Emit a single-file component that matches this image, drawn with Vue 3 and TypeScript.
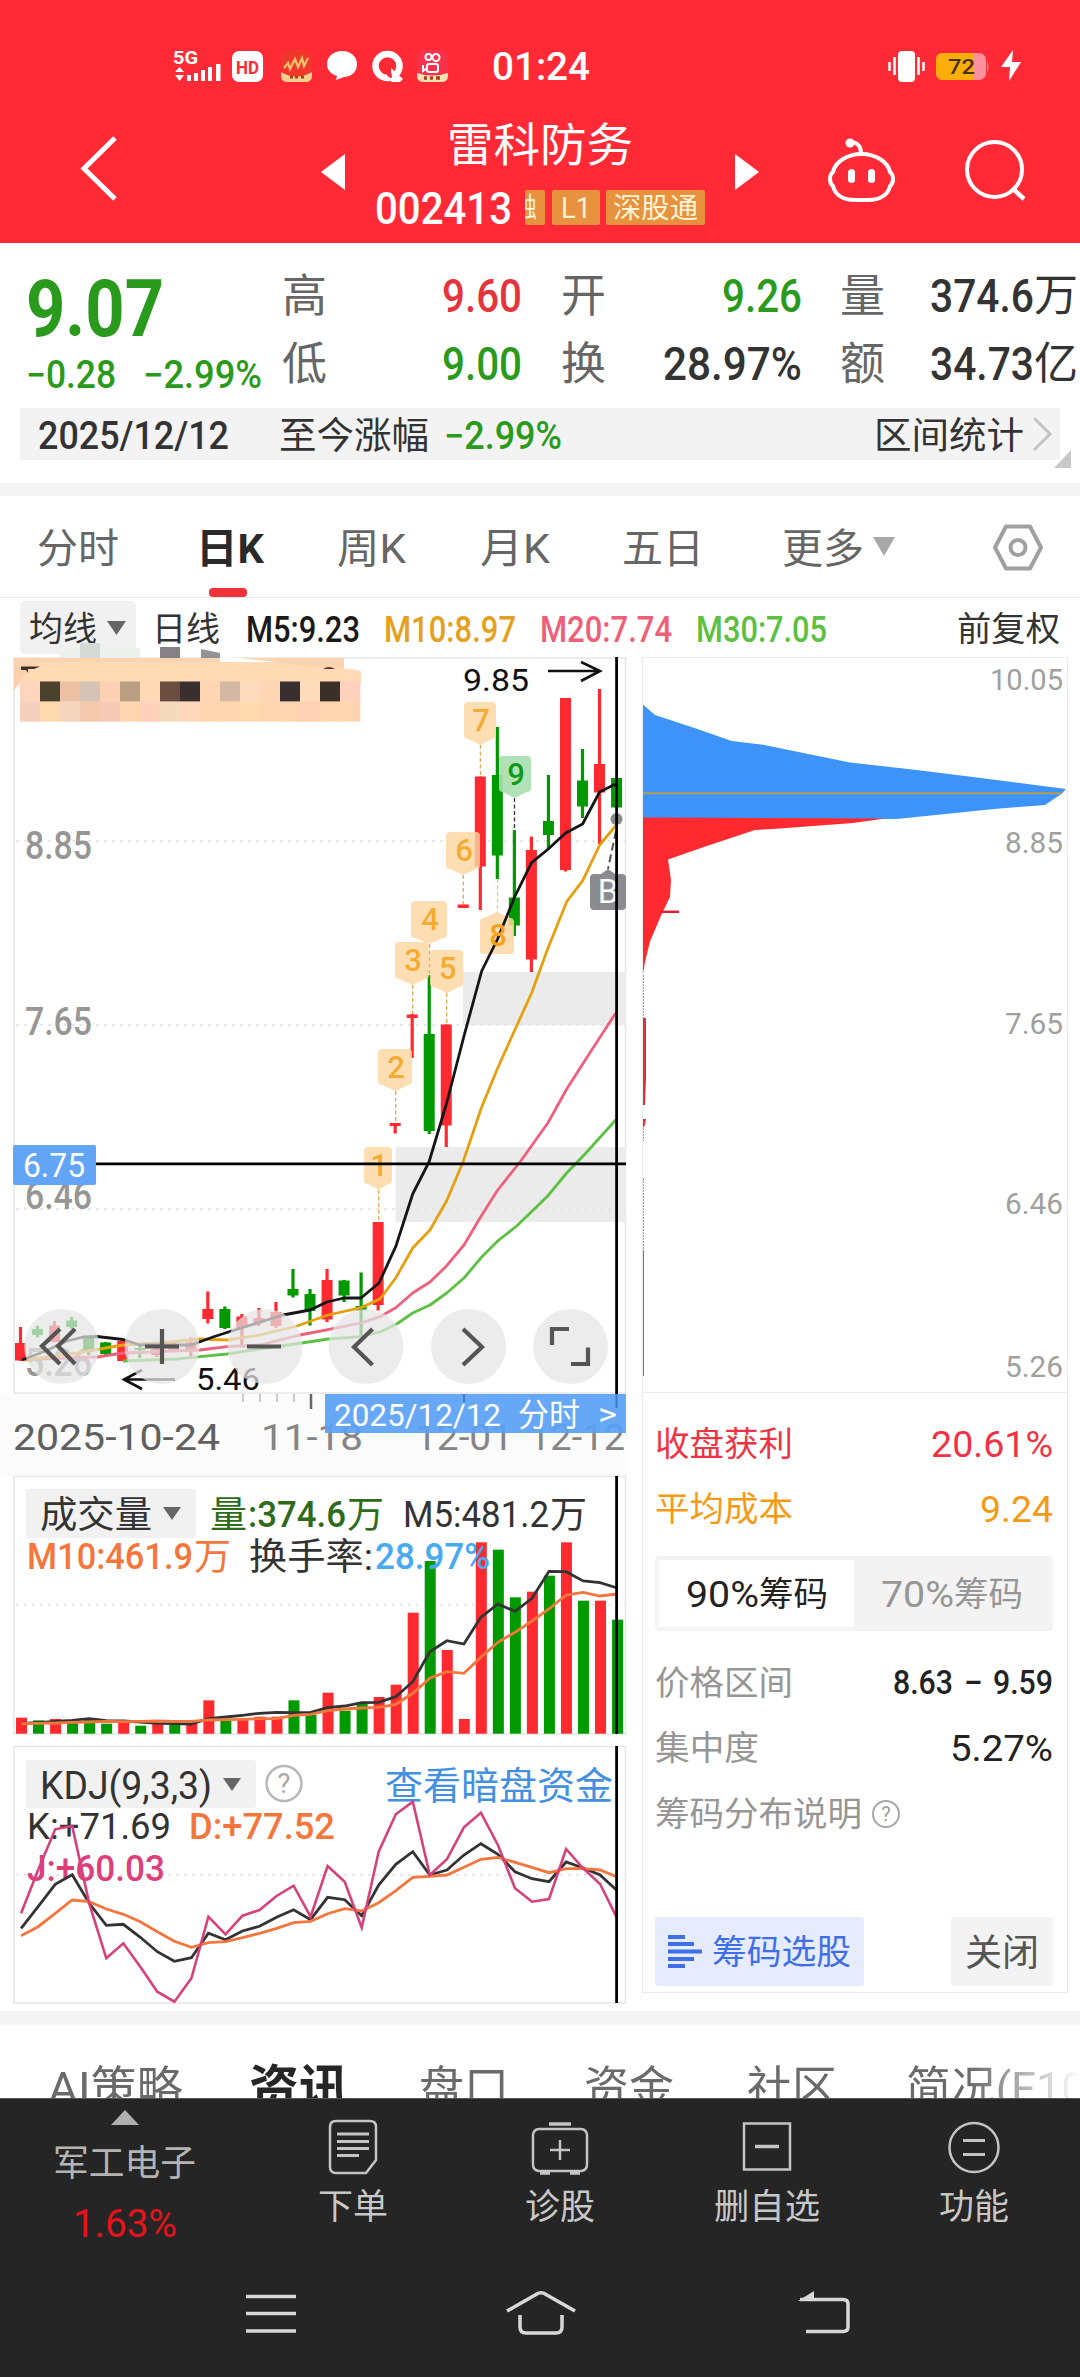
<script setup lang="ts">
import { h } from 'vue'

interface FitProps { t: string; w: number; s: number; b?: number | string; c?: string }

// Single-line label squeezed to an exact advance width, like a condensed DIN face.
const Fit = (p: FitProps) =>
  h('svg', { width: p.w, height: p.s, viewBox: `0 0 ${p.w} ${p.s}`, class: 'fit' }, [
    h('text', {
      x: 0, y: p.s * 0.86, 'font-size': p.s, 'font-weight': p.b ?? 400, fill: p.c ?? 'currentColor',
      textLength: p.w, lengthAdjust: 'spacingAndGlyphs',
    }, p.t),
  ])
Fit.props = ['t', 'w', 's', 'b', 'c']

const RED = '#ff2a30'
const GREEN = '#009a00'
const X0 = 20.5
const STEP = 17.03
const cx = (i: number) => X0 + STEP * i

// [up, high, bodyTop, bodyBottom, low]
type Candle = [number, number, number, number, number]
const candles: Candle[] = [
  [1, 1327, 1343, 1360.5, 1361], [0, 1325.7, 1329, 1335, 1337.5], [1, 1321, 1325.5, 1342, 1342], [0, 1317, 1320.5, 1327, 1329],
  [0, 1337, 1337.5, 1352, 1355], [0, 1342, 1342.5, 1354, 1355], [1, 1341, 1341, 1361, 1361], [0, 1344, 1348, 1350, 1358],
  [1, 1347, 1349, 1355, 1357], [1, 1340, 1345, 1350, 1352], [1, 1337.5, 1342.5, 1351, 1356], [1, 1291.5, 1309, 1319, 1323.5],
  [0, 1306.5, 1309, 1328, 1329], [1, 1314, 1316.5, 1328, 1347.5], [1, 1308, 1318, 1323, 1326], [1, 1302, 1312, 1326, 1328],
  [0, 1269, 1289, 1295.5, 1297.5], [0, 1289, 1294, 1311, 1325.5], [1, 1269, 1280, 1319.5, 1322], [0, 1280, 1280.5, 1295.5, 1302],
  [0, 1272.5, 1306, 1310.5, 1336.5], [1, 1222, 1222, 1305, 1310.5], [1, 1123, 1123, 1126, 1133.5], [1, 1014, 1014.5, 1018, 1058],
  [0, 975, 1034, 1131, 1134], [1, 1024.5, 1024.5, 1125.5, 1147], [1, 904.5, 904.5, 908, 908], [1, 776.5, 776.5, 866.5, 910],
  [0, 727, 775, 855.5, 879], [0, 830, 897.5, 925.5, 936], [1, 836.5, 850, 959.5, 972], [0, 775, 821, 835, 849],
  [1, 698, 698, 870, 871.5], [0, 749, 780.5, 806.5, 818], [1, 689, 764, 792.5, 844], [0, 778, 778, 807.5, 808],
]
const ma = [
  { c: '#5cc043', p: '123,1361 177,1359 200,1356.7 227,1354 267,1348 302,1343 328,1339 361,1336.7 380,1332 396.7,1324 412.7,1313 430,1305 446.7,1293 464,1278 481.7,1257 497.7,1241 516.7,1226 548,1195.7 566.7,1173 585,1154 615.7,1120' },
  { c: '#f0607c', p: '40,1359 97,1357 123,1353 200,1350 227,1346.7 260,1345 300,1335 333,1328.7 361,1323 380,1316.7 395.7,1307.7 412.7,1293 430,1282 446.7,1265.7 464,1245 480,1218 497.7,1190 520,1162 548,1122.7 566.7,1089 588,1055.7 615.7,1013' },
  { c: '#e5a010', p: '25,1360 77,1353 123,1345 160,1343 200,1339 227,1340 260,1335 297,1326 328,1315 361,1307.6 380,1299 395.7,1278 412.7,1248 430,1230 446.7,1200.7 463,1162 481.7,1107 497.7,1068 515.7,1028 531.6,993 548,948 566.7,901.7 582.7,880.7 599.7,845 616.3,825' },
  { c: '#161616', p: '22,1360 43,1352 67,1341 83,1337 97,1336.5 123,1339.5 140,1345 191,1345 213,1337 230,1331.5 283,1315 310,1310 327,1302 344,1298 361,1298 379,1283 395.7,1246.7 412.7,1194 429,1162 446.7,1103 464,1036 481.7,971 497.6,939 514.6,897 531.6,862.6 548.3,849 565.6,833 582.6,824 599.6,792 616.4,783.6' },
]

// TD-sequence markers: number, left, right, top, bottom, stem x, stem end
const marks = [
  { n: '1', l: 364, r: 392, t: 1147, b: 1185, x: 378.7, e: 1222 },
  { n: '2', l: 378, r: 412, t: 1049, b: 1086, x: 395.7, e: 1122 },
  { n: '3', l: 395, r: 429, t: 942, b: 980, x: 412.6, e: 1014 },
  { n: '4', l: 411, r: 447, t: 901, b: 939, x: 429.6, e: 975 },
  { n: '5', l: 430, r: 463, t: 950, b: 988, x: 446.6, e: 1024 },
  { n: '6', l: 446, r: 480, t: 832, b: 870, x: 463.3, e: 905 },
  { n: '7', l: 464, r: 496, t: 702, b: 740, x: 480.4, e: 776 },
  { n: '9', l: 499, r: 531, t: 756, b: 793, x: 514.5, e: 830 },
]
const markShape = (m: typeof marks[number]) =>
  `M${m.l + 4},${m.t}H${m.r - 4}q4,0 4,4V${m.b - 5}q0,4 -4,4L${m.x},${m.b + 5}L${m.l + 4},${m.b - 1}q-4,0 -4,-4V${m.t + 4}q0,-4 4,-4Z`

const mosaicTop = ['#ffd6bd', '#4b412f', '#efc1a4', '#d5c3b6', '#ffd0b3', '#b89f82', '#ffd9b5', '#6b4c40', '#3a2f30', '#ffd5b3', '#d5b8a4', '#ffdabd', '#ffd6b3', '#3a2f30', '#ffdabb', '#3b3028', '#ffd0bd']
const mosaicBot = ['#f5d0bd', '#ffd9ae', '#f5d5bd', '#f5c8ae', '#f5cbb5', '#ffd5ae', '#ffd0ba', '#f3dabb', '#ffd8bb', '#ffd5b0', '#ffd5b0', '#ffd9b0', '#ffd5b0', '#ffd5b0', '#ffd0b4', '#ffd5b0', '#ffd5b0']

const buttons = [
  { x: 61.7, d: 'M60,1329L42,1346L60,1364M75,1329L58,1346L75,1364' },
  { x: 162, d: 'M145,1346.5H179M162,1329V1364' },
  { x: 265, d: 'M247,1346.5H281' },
  { x: 366, d: 'M372.5,1329L354,1347L372.5,1365' },
  { x: 468.5, d: 'M463,1329L482,1347L463,1365' },
  { x: 570.5, d: 'M569,1329H552V1345M588,1347.5V1364H571' },
]

// Volume and KDJ series are given in thirds of a pixel from the top of each panel.
const vy = (v: number) => 1460 + v / 3
const ky = (v: number) => 1740 + v / 3
const line = (a: number[], f: (v: number) => number) => a.map((v, i) => `${(cx(i) + 0.6).toFixed(1)},${f(v).toFixed(1)}`).join(' ')

const vol = [773, 781, 777, 784, 777, 791, 785, 797, 791, 794, 791, 721, 783, 777, 770, 770, 721, 765, 698, 752, 730, 711, 674, 458, 303, 570, 777, 247, 269, 412, 395, 347, 247, 422, 422, 479]
const volUp = '101000101011011100100111011100101010'
const vol5 = [790, 788, 784, 781, 776, 782, 783, 786, 790, 791, 792, 776, 771, 766, 760, 757, 758, 757, 743, 738, 728, 727, 710, 665, 575, 542, 552, 472, 432, 454, 415, 334, 335, 363, 368, 384]
const vol10 = [791, 790, 789, 787, 786, 784, 785, 784, 783, 784, 784, 780, 779, 778, 776, 776, 766, 763, 752, 747, 744, 742, 733, 700, 655, 635, 640, 592, 547, 517, 483, 447, 405, 397, 408, 402]
const kJ = [520, 390, 268, 258, 490, 655, 610, 680, 755, 785, 715, 530, 583, 527, 510, 468, 437, 530, 378, 425, 563, 335, 223, 185, 405, 358, 262, 218, 315, 445, 485, 477, 327, 385, 432, 535]
const kK = [565, 500, 433, 404, 490, 556, 553, 592, 635, 664, 653, 580, 599, 573, 559, 532, 509, 539, 472, 479, 527, 435, 373, 335, 405, 390, 345, 311, 343, 395, 416, 425, 366, 384, 405, 452]
const kD = [587, 560, 520, 480, 485, 507, 523, 545, 575, 604, 622, 608, 605, 593, 580, 565, 548, 544, 521, 506, 513, 488, 452, 412, 409, 405, 382, 358, 352, 367, 382, 398, 386, 386, 390, 411]

interface Label { t: string; x: number; y: number; w: number; s: number; c: string; b?: number }
const volLabels: Label[] = [
  { t: '成交量', x: 40, y: 1528, w: 112, s: 37, c: '#333' },
  { t: '量', x: 210, y: 1528, w: 37, s: 37, c: '#2d6b1a' },
  { t: ':374.6', x: 248, y: 1527, w: 98, s: 37, c: '#2d6b1a', b: 500 },
  { t: '万', x: 347, y: 1528, w: 37, s: 37, c: '#2d6b1a' },
  { t: 'M5:481.2', x: 403, y: 1527, w: 146, s: 37, c: '#333' },
  { t: '万', x: 550, y: 1528, w: 37, s: 37, c: '#333' },
  { t: 'M10:461.9', x: 27, y: 1569, w: 166, s: 37, c: '#f5763c', b: 500 },
  { t: '万', x: 194, y: 1570, w: 37, s: 37, c: '#f5763c' },
  { t: '换手率:', x: 249, y: 1570, w: 124, s: 37, c: '#333' },
  { t: '28.97%', x: 375, y: 1569, w: 115, s: 37, c: '#48aaf0', b: 500 },
]
const kdjLabels: Label[] = [
  { t: 'KDJ(9,3,3)', x: 40, y: 1798.5, w: 172, s: 38, c: '#333' },
  { t: '查看暗盘资金', x: 385, y: 1799, w: 228, s: 38, c: '#4390e0' },
  { t: 'K:+71.69', x: 27, y: 1839, w: 144, s: 37, c: '#333' },
  { t: 'D:+77.52', x: 189, y: 1839, w: 146, s: 37, c: '#f5763c', b: 500 },
  { t: 'J:+60.03', x: 27, y: 1881, w: 138, s: 37, c: '#dc3f7c', b: 500 },
]
const axis = [
  { t: '10.05', y: 689.5, x: 990, w: 73 }, { t: '8.85', y: 853, x: 1005, w: 58 }, { t: '7.65', y: 1033.5, x: 1005, w: 58 },
  { t: '6.46', y: 1213.5, x: 1005, w: 58 }, { t: '5.26', y: 1377, x: 1005, w: 58 },
]
const news = [
  { t: 'AI策略', w: 135, l: 48 }, { t: '资讯', w: 100, l: 249, on: true }, { t: '盘口', w: 90, l: 419 },
  { t: '资金', w: 90, l: 584 }, { t: '社区', w: 90, l: 747 }, { t: '简况(F10)', w: 196, l: 906 },
]
const newsGap = (i: number) => (i ? news[i].l - news[i - 1].l - news[i - 1].w : news[0].l)
</script>

<template>
  <div class="app">
    <header class="head">
      <div class="status">
        <svg class="st-left" width="276" height="44" viewBox="174 44 276 44">
          <g fill="#fff">
            <text x="173" y="63.5" font-size="18" font-weight="700" textLength="25" lengthAdjust="spacingAndGlyphs">5G</text>
            <path d="M175,72l4.5,-5l4.5,5ZM175,75l4.5,6l4.5,-6ZM187,75h4v6h-4ZM194,73h4v8h-4ZM201,70h4v11h-4ZM208,67h4v14h-4ZM216,64h4.5v17h-4.5Z" />
            <rect x="232" y="51" width="31" height="31" rx="7" />
            <path d="M342,51c9,0 15,6 15,13c0,8 -6,13 -13,13l-8,3l1,-4c-6,-2 -10,-6 -10,-12c0,-7 6,-13 15,-13Z" />
          </g>
          <text x="236" y="73.5" font-size="19" font-weight="700" fill="#ff2a36" textLength="23" lengthAdjust="spacingAndGlyphs">HD</text>
          <rect x="281" y="50" width="31" height="32" rx="7" fill="#f1362c" />
          <path d="M281,72q15,9 31,0v4q0,6 -7,6h-17q-7,0 -7,-6Z" fill="#f4d08c" />
          <path d="M284,68l4,-5l2,6l5,-10l3,8l4,-9l2,8l4,-8" stroke="#ffc36a" stroke-width="2.2" fill="none" />
          <path d="M290,77h3m2,0h3m3,0h3" stroke="#a4431d" stroke-width="3" />
          <circle cx="387.500" cy="66" r="12" fill="none" stroke="#fff" stroke-width="6.500" />
          <path d="M391,68l12,11l-3,3h-9Z" fill="#fff" /><path d="M386,69q6,0 6,9q-6,0 -6,-9Z" fill="#ff2a36" />
          <rect x="417" y="50" width="31" height="32" rx="7" fill="#f8324c" />
          <path d="M417,73q15,5 31,0v3q0,6 -7,6h-17q-7,0 -7,-6Z" fill="#f6dfb0" />
          <g fill="none" stroke="#fff" stroke-width="2"><circle cx="428.500" cy="57" r="3" /><circle cx="436" cy="57.500" r="3.500" /><rect x="427" y="64" width="11" height="8" rx="2" /><path d="M423,65v6l4,-3" /></g>
          <path d="M424,78h3m3,0h3m3,0h4" stroke="#a4431d" stroke-width="3.500" />
        </svg>
        <Fit t="01:24" :w="98" :s="39" b="500" />
        <svg class="st-right" width="140" height="44" viewBox="886 44 140 44">
          <rect x="898" y="51" width="17" height="31" rx="4" fill="#fff" />
          <path d="M894.500,57v18M918.500,57v18M889.500,62v9M923.500,62v9" stroke="#fff" stroke-width="2.500" />
          <rect x="936" y="53" width="50" height="27" rx="7" fill="#ff8f9a" />
          <path d="M943,53H974V80H943q-7,0 -7,-7V60q0,-7 7,-7Z" fill="#f9ae0a" />
          <path d="M987,61q3,6 0,12Z" fill="#ff8f9a" />
          <text x="948" y="74" font-size="21" font-weight="500" fill="#47300a" textLength="27" lengthAdjust="spacingAndGlyphs">72</text>
          <path d="M1013,50L1001,67H1010L1009,81L1021,62H1012Z" fill="#fff" />
        </svg>
      </div>
      <div class="title-row">
        <svg class="back" width="44" height="70" viewBox="77 134 44 70"><path d="M115,138L84,168.500L115,199" fill="none" stroke="#fff" stroke-width="5" /></svg>
        <svg class="tri-l" width="24" height="36" viewBox="0 0 24 36"><path d="M24,0V36L0,18Z" fill="#fff" /></svg>
        <div class="title">
          <Fit t="雷科防务" :w="186" :s="46" />
          <div class="code">
            <Fit t="002413" :w="137" :s="45" b="500" />
            <span class="tag cut"><Fit t="融" :w="27" :s="27" /></span>
            <span class="tag l1"><Fit t="L1" :w="30" :s="29" /></span>
            <span class="tag sz"><Fit t="深股通" :w="85" :s="28" /></span>
          </div>
        </div>
        <svg class="tri-r" width="24" height="36" viewBox="0 0 24 36"><path d="M0,0V36L24,18Z" fill="#fff" /></svg>
        <svg class="bot" width="74" height="70" viewBox="824 136 74 70">
          <g fill="none" stroke="#fff" stroke-width="4">
            <path d="M861.500,154C876,154 888,162 890,172C894,175 894,183 890,186C888,195 880,200 868,200H855C843,200 835,195 833,186C829,183 829,175 833,172C835,162 847,154 861.500,154Z" />
            <path d="M861,153C861,147 858,142 850,142" />
          </g>
          <circle cx="850" cy="143" r="4.500" fill="#fff" />
          <rect x="848" y="169" width="7" height="14" rx="3.500" fill="#fff" /><rect x="868" y="169" width="7" height="14" rx="3.500" fill="#fff" />
        </svg>
        <svg class="search" width="66" height="66" viewBox="962 138 66 66"><circle cx="994.500" cy="169.500" r="27.500" fill="none" stroke="#fff" stroke-width="4" /><path d="M1012,188L1024,199" stroke="#fff" stroke-width="4.500" /></svg>
      </div>
    </header>

    <section class="quote">
      <div class="price">
        <Fit t="9.07" :w="138" :s="80" b="700" />
        <div class="chg"><Fit t="−0.28" :w="90" :s="38" b="500" /><Fit t="−2.99%" :w="119" :s="38" b="500" /></div>
      </div>
      <div class="grid">
        <Fit t="高" :w="45" :s="45" /><Fit class="r" t="9.60" :w="80" :s="46" b="500" c="#e5343c" />
        <Fit class="r" t="开" :w="45" :s="45" /><Fit class="r" t="9.26" :w="80" :s="46" b="500" c="#2a9a1c" />
        <Fit class="r" t="量" :w="45" :s="45" /><span class="pair"><Fit t="374.6" :w="104" :s="46" b="500" /><Fit t="万" :w="44" :s="44" /></span>
        <Fit t="低" :w="45" :s="45" /><Fit class="r" t="9.00" :w="80" :s="46" b="500" c="#2a9a1c" />
        <Fit class="r" t="换" :w="45" :s="45" /><Fit class="r" t="28.97%" :w="139" :s="46" b="500" c="#333" />
        <Fit class="r" t="额" :w="45" :s="45" /><span class="pair"><Fit t="34.73" :w="104" :s="46" b="500" /><Fit t="亿" :w="44" :s="44" /></span>
      </div>
    </section>
    <section class="datebar">
      <Fit t="2025/12/12" :w="191" :s="38" b="500" />
      <Fit class="since" t="至今涨幅" :w="150" :s="37" />
      <Fit class="pct" t="−2.99%" :w="118" :s="38" b="500" c="#2a9a1c" />
      <Fit class="range" t="区间统计" :w="150" :s="37" />
      <svg class="more" width="22" height="36" viewBox="0 0 22 36"><path d="M2,2L18,18L2,34" fill="none" stroke="#c4c4c4" stroke-width="3" /></svg>
      <svg class="corner" width="17" height="18"><path d="M17,0V18H0Z" fill="#c8c8c8" /></svg>
    </section>
    <div class="band"></div>

    <nav class="tabs">
      <Fit class="t1" t="分时" :w="82" :s="41" />
      <span class="t2 on"><Fit t="日K" :w="68" :s="41" b="700" /><i></i></span>
      <Fit class="t3" t="周K" :w="69" :s="41" /><Fit class="t4" t="月K" :w="70" :s="41" /><Fit class="t5" t="五日" :w="82" :s="41" />
      <span class="t6 moretab"><Fit t="更多" :w="82" :s="41" /><svg class="drop" width="22" height="19"><path d="M0,0H22L11,19Z" fill="#a8a8a8" /></svg></span>
      <svg class="t7" width="52" height="50" viewBox="992 521 52 50"><path d="M1006,525.500H1030L1041,546.500L1030,567.500H1006L995,546.500Z" fill="none" stroke="#a0a0a0" stroke-width="4" stroke-linejoin="round" /><circle cx="1018" cy="546.500" r="7.500" fill="none" stroke="#a0a0a0" stroke-width="4" /></svg>
    </nav>
    <div class="marow">
      <span class="sel"><Fit t="均线" :w="68" :s="34" /><svg width="19" height="14"><path d="M0,0H19L9.500,14Z" fill="#666" /></svg></span>
      <Fit class="m0" t="日线" :w="68" :s="34" />
      <Fit class="m1" t="M5:9.23" :w="114" :s="36" b="500" c="#1a1a1a" />
      <Fit class="m2" t="M10:8.97" :w="132" :s="36" b="500" c="#e5a020" />
      <Fit class="m3" t="M20:7.74" :w="132" :s="36" b="500" c="#ee607a" />
      <Fit class="m4" t="M30:7.05" :w="131" :s="36" b="500" c="#5cc043" />
      <Fit class="m5" t="前复权" :w="103" :s="34" />
    </div>

    <main class="charts">
      <div class="left">
        <svg class="plot" width="642" height="819" viewBox="0 657 642 819">
          <rect x="0" y="1394" width="628" height="82" fill="#fbfbfb" />
          <rect x="14" y="658" width="611.500" height="735" fill="#fff" stroke="#e6e6e6" stroke-width="1.500" />
          <path d="M463,972H626V1025H463ZM395.700,1147H626V1222H395.700Z" fill="#ebebeb" />
          <path d="M16,841H625M16,1025H625M16,1209H625" stroke="#e2e2e2" stroke-width="1.500" stroke-dasharray="3 5" />
          <g font-size="38" fill="#969696" font-weight="500">
            <text x="25" y="859" textLength="67" lengthAdjust="spacingAndGlyphs">8.85</text>
            <text x="25" y="1034.500" textLength="67" lengthAdjust="spacingAndGlyphs">7.65</text>
            <text x="25" y="1209" textLength="67" lengthAdjust="spacingAndGlyphs">6.46</text>
            <text x="25" y="1376" textLength="67" lengthAdjust="spacingAndGlyphs">5.26</text>
          </g>
          <g v-for="(k, i) in candles" :key="i" :fill="k[0] ? RED : GREEN">
            <rect :x="cx(i) - 1.6" :y="k[1]" width="3.200" :height="k[4] - k[1]" />
            <rect :x="cx(i) - 5.5" :y="k[2]" width="11" :height="k[3] - k[2]" />
          </g>
          <g v-for="m in marks" :key="m.n" :opacity="m.n === '9' ? 1 : 0.9">
            <path :d="`M${m.x},${m.b + 5}V${m.e}`" :stroke="m.n === '9' ? '#333' : '#e0a040'" stroke-width="1.300" stroke-dasharray="4 2.500" />
            <path :d="markShape(m)" :fill="m.n === '9' ? '#a8dfae' : '#fdd7a2'" opacity="0.9" />
            <text :x="(m.l + m.r) / 2 + 1" :y="m.t + 29" font-size="31" font-weight="500" text-anchor="middle" :fill="m.n === '9' ? '#0f9a1a' : '#f5a11c'">{{ m.n }}</text>
          </g>
          <path d="M497.500,879V913" stroke="#e8c890" stroke-width="1.300" stroke-dasharray="4 2.500" />
          <path d="M484,918L497,912L510,918q4,0 4,4V950q0,4 -4,4H484q-4,0 -4,-4V922q0,-4 4,-4Z" fill="#fdd7a2" opacity="0.85" />
          <polyline v-for="l in ma" :key="l.c" :points="l.p" fill="none" :stroke="l.c" stroke-width="2.800" stroke-linejoin="round" />
          <text x="498" y="946" font-size="31" font-weight="500" text-anchor="middle" fill="#f5a11c">8</text>
          <path d="M616,831L608,869" stroke="#555" stroke-width="2" stroke-dasharray="8 4" />
          <circle cx="616.500" cy="819" r="6" fill="#8a8a8a" />
          <path d="M594,874H601L608,869L615,874H622q4,0 4,4V906q0,4 -4,4H594q-4,0 -4,-4V878q0,-4 4,-4Z" fill="#8b8c90" />
          <text x="608" y="903" font-size="33" text-anchor="middle" fill="#fff">B</text>
          <path d="M616.600,657V1394M96,1163.800H626" stroke="#000" stroke-width="2.800" />
          <g fill="none" stroke="#111" stroke-width="2.600"><path d="M548,671H600M581,662L600,671L581,681" /><path d="M175,1379.500H124M142,1370L124,1379.500L142,1389" /></g>
          <text x="463" y="691" font-size="32" fill="#111" textLength="66" lengthAdjust="spacingAndGlyphs">9.85</text>
          <text x="196" y="1389.500" font-size="32" fill="#111" textLength="64" lengthAdjust="spacingAndGlyphs">5.46</text>
          <rect x="13" y="1145" width="83" height="40" rx="2" fill="#62a5f6" />
          <text x="23" y="1177" font-size="33" fill="#fff" textLength="62" lengthAdjust="spacingAndGlyphs">6.75</text>
          <g v-for="b in buttons" :key="b.x">
            <circle :cx="b.x" cy="1346.500" r="37.500" fill="#e4e4e4" opacity="0.72" />
            <path :d="b.d" fill="none" stroke="#555" stroke-width="4.200" />
          </g>
          <path d="M243,1394v8M260,1394v8M277,1394v8M294,1394v8" stroke="#bbb" stroke-width="1.500" />
          <path d="M311,1394v15" stroke="#666" stroke-width="2.500" />
          <g font-size="37" fill="#606060">
            <text x="13" y="1449.500" textLength="207" lengthAdjust="spacingAndGlyphs">2025-10-24</text>
            <text x="261" y="1449.500" fill="#858585" textLength="102" lengthAdjust="spacingAndGlyphs">11-18</text>
            <text x="415" y="1449.500" fill="#858585" textLength="98" lengthAdjust="spacingAndGlyphs">12-01</text>
            <text x="529" y="1449.500" fill="#858585" textLength="96" lengthAdjust="spacingAndGlyphs">12-12</text>
          </g>
          <rect x="325" y="1394" width="301" height="39" fill="#5aa0f5" opacity="0.93" />
          <path d="M464,1394v8M616.500,1394v14" stroke="#3c7cc8" stroke-width="2" />
          <g font-size="32" fill="#fff">
            <text x="334" y="1425.500" textLength="167" lengthAdjust="spacingAndGlyphs">2025/12/12</text>
            <text x="518" y="1425.500" textLength="62" lengthAdjust="spacingAndGlyphs">分时</text>
            <text x="598" y="1425" textLength="19" lengthAdjust="spacingAndGlyphs">&gt;</text>
          </g>
          <path d="M57,661q4,-9 12,-13H140V661Z" fill="#ecf1ed" />
          <path d="M80,643H100V662H80Z" fill="#d5dad5" /><path d="M160,647H180V662H160Z" fill="#858286" /><path d="M201,649L220,653V662H201Z" fill="#959296" />
          <path d="M14,658H344V670H14Z" fill="#fad4b0" /><path d="M14,668H34L14,690Z" fill="#fad0b0" />
          <path d="M220,656L276,662H220Z" fill="#fff" />
          <path d="M20,682q8,-14 20,-20H270L330,668q31,1 31,4V684H20Z" fill="#ffdab5" />
          <path d="M21,666.500H40L34,669H28V673L26,670H21Z" fill="#3b3028" /><path d="M323,669q6,-4 12,0Z" fill="#5b3b28" />
          <g v-for="(c, i) in mosaicTop" :key="i"><rect :x="20 + 20 * i" y="681.500" width="20.300" height="20.300" :fill="c" /><rect :x="20 + 20 * i" y="701.500" width="20.300" height="20.200" :fill="mosaicBot[i]" /></g>
        </svg>

        <svg class="plot" width="642" height="270" viewBox="0 1476 642 270">
          <rect x="14" y="1476.500" width="611.500" height="257.500" fill="#fff" stroke="#e6e6e6" stroke-width="1.500" />
          <path d="M16,1604.700H625" stroke="#e2e2e2" stroke-width="1.500" stroke-dasharray="3 5" />
          <rect x="26" y="1489" width="170" height="49" rx="3" fill="#f1f1f1" />
          <path d="M163,1507H181L172,1520Z" fill="#666" />
          <rect v-for="(v, i) in vol" :key="i" :x="cx(i) - 4.5" :y="vy(v)" width="11" :height="1733.7 - vy(v)" :fill="volUp[i] === '1' ? RED : GREEN" />
          <polyline :points="line(vol5, vy)" fill="none" stroke="#333" stroke-width="2.800" />
          <polyline :points="line(vol10, vy)" fill="none" stroke="#f5763c" stroke-width="2.800" />
          <path d="M616.600,1476V1734" stroke="#000" stroke-width="2.800" />
          <text v-for="l in volLabels" :key="l.x + l.t" :x="l.x" :y="l.y" :font-size="l.s" :fill="l.c" :font-weight="l.b ?? 400" :textLength="l.w" lengthAdjust="spacingAndGlyphs">{{ l.t }}</text>
        </svg>

        <svg class="plot" width="642" height="265" viewBox="0 1746 642 265">
          <rect x="14" y="1746.500" width="611.500" height="256.500" fill="#fff" stroke="#e6e6e6" stroke-width="1.500" />
          <path d="M16,1875H625" stroke="#e2e2e2" stroke-width="1.500" stroke-dasharray="3 5" />
          <rect x="26" y="1760" width="230" height="48" rx="3" fill="#f1f1f1" />
          <path d="M223,1778H241L232,1791Z" fill="#666" />
          <circle cx="284" cy="1783.500" r="17.500" fill="none" stroke="#b8b8b8" stroke-width="2.500" />
          <text x="284" y="1793" font-size="27" text-anchor="middle" fill="#a8a8a8">?</text>
          <text v-for="l in kdjLabels" :key="l.t" :x="l.x" :y="l.y" :font-size="l.s" :fill="l.c" :font-weight="l.b ?? 400" :textLength="l.w" lengthAdjust="spacingAndGlyphs">{{ l.t }}</text>
          <polyline :points="line(kK, ky)" fill="none" stroke="#333" stroke-width="2.800" />
          <polyline :points="line(kD, ky)" fill="none" stroke="#f5763c" stroke-width="2.800" />
          <polyline :points="line(kJ, ky)" fill="none" stroke="#d6417c" stroke-width="2.600" />
          <path d="M616.600,1746V2003" stroke="#000" stroke-width="2.800" />
        </svg>
      </div>

      <aside class="chips">
        <svg class="dist" width="425" height="734" viewBox="642 658 425 734">
          <path d="M643,704.500L655,715L696.700,728.700L731.700,741L763,744.700L850,762.600L916.700,770L963,775.700L1066,789L1061.700,793.700L1045,805L996.700,808.700L896.700,819H643Z" fill="#3e93f9" />
          <path d="M643,817.500L885,818.500L853,823L773,829L755,830L706.700,846L668,859.600L671,880L670,897L661.700,914L650,941.500L645,962L643,974Z" fill="#ff2a30" />
          <path d="M643,793.200H1061" stroke="#b39c50" stroke-width="2" />
          <path d="M661,911.800H679" stroke="#e02030" stroke-width="2.500" />
          <path d="M643,1018H646V1080L645,1105H643ZM643,1119H646L645,1125L643,1128Z" fill="#d83440" />
          <path d="M643.500,975V1018M643.500,1128V1141M643.500,1178V1250" stroke="#e08088" stroke-width="1" stroke-dasharray="2 1" /><path d="M643.500,1250V1376" stroke="#c8505a" stroke-width="1" />
          <text v-for="a in axis" :key="a.t" :x="a.x" :y="a.y" font-size="29" fill="#a0a0a0" :textLength="a.w" lengthAdjust="spacingAndGlyphs">{{ a.t }}</text>
        </svg>
        <div class="info">
          <div class="kv red"><Fit t="收盘获利" :w="138" :s="34" /><Fit t="20.61%" :w="122" :s="36" /></div>
          <div class="kv org"><Fit t="平均成本" :w="138" :s="34" /><Fit t="9.24" :w="73" :s="36" /></div>
          <div class="seg"><span class="act"><Fit t="90%" :w="73" :s="36" /><Fit t="筹码" :w="69" :s="34" /></span><span><Fit t="70%" :w="73" :s="36" /><Fit t="筹码" :w="69" :s="34" /></span></div>
          <div class="kv"><Fit t="价格区间" :w="138" :s="34" /><span class="rng"><Fit t="8.63" :w="60" :s="33" b="500" /><Fit t="−" :w="19" :s="33" b="500" /><Fit t="9.59" :w="60" :s="33" b="500" /></span></div>
          <div class="kv"><Fit t="集中度" :w="104" :s="34" /><Fit t="5.27%" :w="103" :s="36" c="#222" /></div>
          <div class="kv note"><Fit t="筹码分布说明" :w="207" :s="34" /><svg width="30" height="30"><circle cx="15" cy="15" r="13" fill="none" stroke="#a8a8a8" stroke-width="2" /><text x="15" y="22" font-size="20" text-anchor="middle" fill="#a0a0a0">?</text></svg></div>
          <div class="acts">
            <button class="pick"><svg width="34" height="33"><path d="M0,2H17M0,9H26M0,16.500H34M0,24H26M0,31H17" stroke="#3f6fe8" stroke-width="4" /></svg><Fit t="筹码选股" :w="139" :s="34" /></button>
            <button class="close"><Fit t="关闭" :w="74" :s="37" /></button>
          </div>
        </div>
      </aside>
    </main>
    <div class="band b2"></div>

    <nav class="news">
      <span v-for="(n, i) in news" :key="n.t" :class="{ on: n.on }" :style="{ marginLeft: newsGap(i) + 'px' }"><Fit :t="n.t" :w="n.w" :s="n.on ? 50 : 45" :b="n.on ? 700 : 400" /></span>
    </nav>

    <footer class="foot">
      <div class="acts-row">
        <div class="sector">
          <svg width="28" height="15"><path d="M14,0L28,15H0Z" fill="#b0b0b0" /></svg>
          <Fit t="军工电子" :w="143" :s="36" />
          <Fit t="1.63%" :w="104" :s="39" c="#e5141c" />
        </div>
        <div class="act-item">
          <svg width="60" height="58" viewBox="0 0 60 58"><path d="M13,4H47q6,0 6,6V43L43,56H13q-6,0 -6,-6V10q0,-6 6,-6Z" fill="none" stroke="#c4c4c4" stroke-width="2.500" /><path d="M14,17H46M14,24.500H46M14,31.500H46M14,38.500H36" stroke="#c4c4c4" stroke-width="3" /></svg>
          <Fit t="下单" :w="70" :s="35" />
        </div>
        <div class="act-item">
          <svg width="60" height="58" viewBox="0 0 60 58"><rect x="3" y="12" width="54" height="42" rx="6" fill="none" stroke="#c4c4c4" stroke-width="2.500" /><path d="M19,7H41M10,56H20M40,56H50" stroke="#c4c4c4" stroke-width="3.500" /><path d="M20,33H40M30,23V43" stroke="#c4c4c4" stroke-width="2.500" /></svg>
          <Fit t="诊股" :w="70" :s="35" />
        </div>
        <div class="act-item">
          <svg width="60" height="58" viewBox="0 0 60 58"><rect x="7" y="6.500" width="46" height="46" fill="none" stroke="#c4c4c4" stroke-width="2.500" /><path d="M18,29.500H42" stroke="#c4c4c4" stroke-width="3.500" /></svg>
          <Fit t="删自选" :w="106" :s="35" />
        </div>
        <div class="act-item">
          <svg width="60" height="58" viewBox="0 0 60 58"><circle cx="30" cy="30.500" r="24.500" fill="none" stroke="#c4c4c4" stroke-width="2.500" /><path d="M19,23.500H41M19,37.500H41" stroke="#c4c4c4" stroke-width="3" /></svg>
          <Fit t="功能" :w="70" :s="35" />
        </div>
      </div>
      <div class="sys">
        <svg width="50" height="44"><path d="M0,5.500H50M0,22.500H50M0,40H50" stroke="#d8d8d8" stroke-width="3.500" /></svg>
        <svg class="home" width="74" height="48" viewBox="504 2289 74 48"><path d="M507,2311L536,2294.500Q541,2291 546,2294.500L575,2311M520,2315V2327Q520,2333 526,2333H556Q562,2333 562,2327V2315" fill="none" stroke="#d8d8d8" stroke-width="3.500" /></svg>
        <svg class="undo" width="54" height="48" viewBox="797 2289 54 48"><path d="M800,2299.500H843Q848,2299.500 848,2304V2327Q848,2331.500 843,2331.500H806" fill="none" stroke="#d8d8d8" stroke-width="3.500" /><path d="M798,2301L814,2291V2301Z" fill="#d8d8d8" /></svg>
      </div>
    </footer>
  </div>
</template>

<style>
body { background: #fff; }
</style>

<style scoped>
.app { width: 1080px; height: 2377px; overflow: hidden; background: #fff; color: #333; font-family: Roboto, "Noto Sans CJK SC", sans-serif; }
svg { display: block; flex: none; overflow: visible; }
.fit { display: block; flex: none; overflow: visible; }
.head { height: 243px; background: #ff2a36; color: #fff; }
.status { height: 100px; display: flex; align-items: flex-start; padding: 44px 54px 0 174px; box-sizing: border-box; }
.st-left { margin-right: 42px; }
.status .fit { margin-top: 2px; }
.st-right { margin-left: auto; }
.title-row { display: flex; align-items: flex-start; height: 143px; }
.back { margin: 34px 200px 0 77px; }
.tri-l { margin-top: 54px; }
.tri-r { margin-top: 54px; }
.title { width: 390px; padding-top: 21px; display: flex; flex-direction: column; align-items: center; box-sizing: border-box; }
.code { display: flex; align-items: center; align-self: stretch; padding-left: 30px; margin-top: 19px; height: 44px; }
.code > .fit { margin-top: -2px; }
.tag { height: 35px; background: #e8913f; color: #fff4d6; display: flex; align-items: center; justify-content: center; border-radius: 2px; margin-left: 7px; margin-top: -1px; }
.tag.cut { width: 20px; margin-left: 13px; overflow: hidden; justify-content: flex-end; padding-right: 8px; box-sizing: border-box; }
.l1 { width: 48px; }
.sz { width: 99px; margin-left: 6px; }
.bot { margin: 36px 0 0 65px; }
.search { margin: 38px 0 0 64px; }

.quote { height: 165px; display: flex; }
.price { width: 282px; padding: 24px 0 0 26px; box-sizing: border-box; color: #2a9a1c; }
.chg { display: flex; justify-content: space-between; margin-top: 8px; width: 236px; }
.grid { display: grid; grid-template-columns: 45px 195px 84px 196px 83px 193px; grid-auto-rows: 68px; align-items: center; padding-top: 18px; color: #666; }
.r { justify-self: end; }
.pair { display: flex; align-items: center; justify-self: end; color: #333; }

.datebar { height: 52px; margin: 0 20px; background: #f3f3f3; display: flex; align-items: center; position: relative; padding-left: 18px; }
.datebar > .fit { margin-top: 2px; }
.since { margin-left: 50px; }
.pct { margin-left: 15px; }
.range { margin-left: auto; }
.more { margin: 0 6px 0 8px; }
.corner { position: absolute; right: -11px; bottom: -8px; }
.band { height: 13px; margin-top: 23px; background: #f4f4f4; }
.band.b2 { margin: 0; height: 14px; }

.tabs { height: 102px; border-bottom: 1.5px solid #e8e8e8; display: flex; align-items: center; padding: 4px 36px 0 37px; color: #666; box-sizing: border-box; }
.on { color: #2a2a2a; position: relative; }
.tabs .on i { position: absolute; left: 13px; top: 60px; width: 38px; height: 9px; border-radius: 4px; background: #f0323a; }
.t2 { margin-left: 77px; }
.t3 { margin-left: 73px; }
.t4 { margin-left: 74px; }
.t5 { margin-left: 72px; }
.t6 { margin-left: 78px; }
.t7 { margin: -3px 0 0 auto; }
.moretab { display: flex; align-items: center; gap: 9px; }
.drop { margin-top: -4px; }
.marow { height: 59px; display: flex; align-items: center; padding-left: 20px; padding-right: 20px; box-sizing: border-box; }
.marow > .fit, .sel > .fit { margin-top: 3px; }
.sel { width: 116px; height: 53px; border-radius: 5px; background: #f1f1f1; display: flex; align-items: center; gap: 10px; padding-left: 9px; box-sizing: border-box; }
.m0 { margin-left: 16px; }
.m1 { margin-left: 26px; }
.m2 { margin-left: 24px; }
.m3 { margin-left: 24px; }
.m4 { margin-left: 24px; }
.m5 { margin-left: auto; }

.charts { height: 1354px; display: flex; }
.left { width: 642px; }
.chips { width: 426px; height: 1336px; border: 1.5px solid #e8ecec; box-sizing: border-box; }
.dist { width: 425px; margin-left: -1px; border-bottom: 1.5px solid #e8ecec; }
.info { padding: 0 14px 0 12px; height: 598px; display: flex; flex-direction: column; color: #969696; }
.kv { display: flex; justify-content: space-between; align-items: center; height: 65.500px; }
.kv.red { color: #ef3346; margin-top: 18px; }
.kv.org { color: #f59a14; }
.kv.note { justify-content: flex-start; gap: 9px; }
.rng { display: flex; gap: 10.500px; color: #222; }
.seg { height: 75px; margin: 14px 0 19px; background: #f3f3f3; border-radius: 4px; padding: 4px; box-sizing: border-box; display: flex; }
.seg span { flex: 1; display: flex; align-items: center; justify-content: center; }
.seg .fit { margin-top: 1px; }
.seg .act { background: #fff; color: #222; }
.acts { display: flex; justify-content: space-between; margin-top: 70px; }
.acts button { height: 69px; border: 0; border-radius: 3px; padding: 0; display: flex; align-items: center; justify-content: center; font-family: inherit; }
.acts .fit { margin-top: 2px; }
.pick { width: 209px; gap: 10px; background: #e6ecfd; color: #3f6fe8; }
.close { width: 102px; background: #f3f3f3; color: #555; }

.news { height: 73px; overflow: hidden; display: flex; align-items: flex-start; color: #6a6a6a; padding-top: 40px; box-sizing: border-box; mask-image: linear-gradient(90deg, #000 970px, transparent 1080px); }
.news .on { color: #262626; margin-top: -2px; }
.news span { flex: none; }

.foot { height: 279px; background: #252525; color: #c8c8c8; border-top: 1px solid #555; box-sizing: border-box; }
.acts-row { display: flex; height: 160px; }
.sector { width: 249px; display: flex; flex-direction: column; align-items: center; padding-top: 11px; box-sizing: border-box; color: #b4b4b4; }
.sector .fit { margin-top: 20px; }
.sector .fit + .fit { margin-top: 22px; }
.act-item { width: 207.200px; display: flex; flex-direction: column; align-items: center; padding-top: 18px; box-sizing: border-box; gap: 14px; }
.sys { display: flex; padding: 30px 229px 0 246px; justify-content: space-between; align-items: center; }
.home { margin-left: -12px; }
</style>
